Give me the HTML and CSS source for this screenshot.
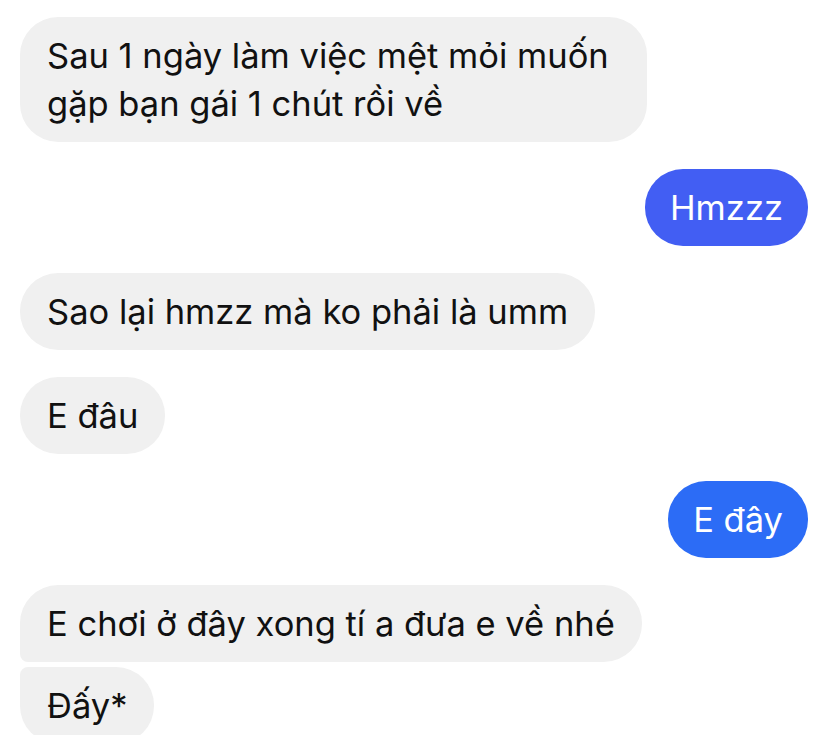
FILE: index.html
```html
<!DOCTYPE html>
<html lang="vi">
<head>
    <meta charset="UTF-8">
    <meta name="viewport" content="width=device-width, initial-scale=1.0">
    <title>Tin nhắn</title>
    <link rel="stylesheet" href="styles.css">
</head>
<body>

    <div class="chat">
        <!-- tin nhắn nhận -->
        <div class="msg in">Sau 1 ngày làm việc mệt mỏi muốn gặp bạn gái 1 chút rồi về</div>

        <div class="msg out out-1">Hmzzz</div>

        <div class="msg in">Sao lại hmzz mà ko phải là umm</div>

        <div class="msg in">E đâu</div>

        <div class="msg out out-2">E đây</div>

        <!-- nhóm 2 tin liền nhau -->
        <div class="group">
            <div class="msg in first">E chơi ở đây xong tí a đưa e về nhé</div>
            <div class="msg in last">Đấy*</div>
        </div>
    </div>

</body>
</html>
```

FILE: styles.css
```css
body {
    margin: 0;
    padding: 0;
    background: #ffffff;
    font-family: Inter, "Noto Sans", sans-serif;
    color: #111111;
    overflow: hidden;
}
.chat {
    display: flex;
    flex-direction: column;
    gap: 27px;
    padding: 17px 20px 0 20px;
}
.msg {
    font-size: 34.5px;
    line-height: 48px;
    padding: 14.5px 27px;
    border-radius: 38px;
    max-width: 573px;
}
.in {
    align-self: flex-start;
    background: #f0f0f0;
}
.out {
    align-self: flex-end;
    color: #ffffff;
    padding: 14.5px 25px;
}
.out-1 {
    background: #425ef3;
}
.out-2 {
    background: #2c6cf6;
}
.group {
    display: flex;
    flex-direction: column;
    align-items: flex-start;
    gap: 5px;
}
.first {
    border-bottom-left-radius: 8px;
}
.last {
    border-top-left-radius: 8px;
}
```
